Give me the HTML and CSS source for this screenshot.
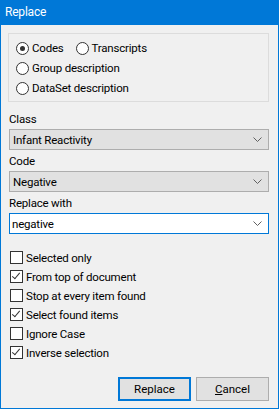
FILE: index.html
```html
<!DOCTYPE html>
<html lang="en">
<head>
  <meta charset="UTF-8">
  <title>Replace</title>
  <link rel="stylesheet" href="styles.css">
</head>
<body>
  <div class="window">
    <div class="titlebar">Replace</div>
    <div class="content">
      <fieldset class="group">
        <div class="radio-row">
          <label class="radio"><span class="dot checked"></span>Codes</label>
          <label class="radio"><span class="dot"></span>Transcripts</label>
        </div>
        <label class="radio"><span class="dot"></span>Group description</label>
        <label class="radio"><span class="dot"></span>DataSet description</label>
      </fieldset>

      <div class="field-label">Class</div>
      <div class="combo">
        <span>Infant Reactivity</span>
        <svg class="chev" width="9" height="5" viewBox="0 0 9 5"><path d="M0.5 0.5 L4.5 4.5 L8.5 0.5" fill="none" stroke="#606060" stroke-width="1"/></svg>
      </div>

      <div class="field-label">Code</div>
      <div class="combo">
        <span>Negative</span>
        <svg class="chev" width="9" height="5" viewBox="0 0 9 5"><path d="M0.5 0.5 L4.5 4.5 L8.5 0.5" fill="none" stroke="#606060" stroke-width="1"/></svg>
      </div>

      <div class="field-label">Replace with</div>
      <div class="combo edit">
        <span>negative</span>
        <svg class="chev" width="9" height="5" viewBox="0 0 9 5"><path d="M0.5 0.5 L4.5 4.5 L8.5 0.5" fill="none" stroke="#606060" stroke-width="1"/></svg>
      </div>

      <div class="checks">
        <label class="check"><span class="box"></span>Selected only</label>
        <label class="check"><span class="box on"></span>From top of document</label>
        <label class="check"><span class="box"></span>Stop at every item found</label>
        <label class="check"><span class="box on"></span>Select found items</label>
        <label class="check"><span class="box"></span>Ignore Case</label>
        <label class="check"><span class="box on"></span>Inverse selection</label>
      </div>

      <div class="buttons">
        <button class="btn default">Replace</button>
        <button class="btn"><u>C</u>ancel</button>
      </div>
    </div>
  </div>
</body>
</html>
```

FILE: styles.css
```css
body {
  margin: 0;
  font-family: Roboto, "Noto Sans", sans-serif;
  font-size: 11.5px;
  letter-spacing: -0.2px;
  color: #000;
  background: #f0f0f0;
}
.window {
  width: 279px;
  height: 409px;
  box-sizing: border-box;
  border: 1px solid #0078d7;
  border-top: none;
  background: #f0f0f0;
}
.titlebar {
  height: 25px;
  background: #0078d7;
  color: #fff;
  font-size: 12px;
  line-height: 24px;
  padding-left: 5px;
  margin: 0 -1px;
}
.content {
  padding: 8px 9px 0 7px;
}
.group {
  margin: 0;
  height: 69px;
  box-sizing: border-box;
  border: 1px solid #dcdcdc;
  padding: 4px 0 0 7px;
}
.radio-row {
  display: flex;
  gap: 12px;
}
.radio {
  display: flex;
  align-items: center;
  height: 20px;
}
.dot {
  width: 11px;
  height: 11px;
  border: 1px solid #333;
  border-radius: 50%;
  background: #fff;
  margin-right: 3px;
  position: relative;
}
.dot.checked::after {
  content: "";
  position: absolute;
  left: 3px;
  top: 3px;
  width: 5px;
  height: 5px;
  border-radius: 50%;
  background: #333;
}
.field-label {
  height: 15px;
  line-height: 15px;
  margin: 10px 0 2px 1px;
}
.combo + .field-label {
  margin-top: 4px;
}
.combo {
  height: 21px;
  margin-left: 1px;
  box-sizing: border-box;
  border: 1px solid #adadad;
  background: #e1e1e1;
  display: flex;
  align-items: center;
  justify-content: space-between;
  padding: 0 6px 0 3px;
}
.combo.edit {
  background: #fff;
  border-color: #0078d7;
  padding-left: 2px;
}
.chev {
  display: block;
}
.checks {
  margin-top: 14px;
  padding-left: 2px;
}
.check {
  display: flex;
  align-items: center;
  height: 19px;
}
.box {
  width: 11px;
  height: 11px;
  border: 1px solid #333;
  background: #fff;
  margin-right: 3px;
  position: relative;
}
.box.on::after {
  content: "";
  position: absolute;
  left: 3px;
  top: 0px;
  width: 3px;
  height: 7px;
  border: solid #333;
  border-width: 0 1px 1px 0;
  transform: rotate(40deg);
}
.buttons {
  display: flex;
  justify-content: flex-end;
  gap: 5px;
  margin-top: 15px;
}
.btn {
  font: inherit;
  width: 73px;
  height: 24px;
  box-sizing: border-box;
  background: #e1e1e1;
  border: 1px solid #adadad;
  padding: 0;
  color: #000;
}
.btn.default {
  border: 2px solid #0078d7;
}
```
